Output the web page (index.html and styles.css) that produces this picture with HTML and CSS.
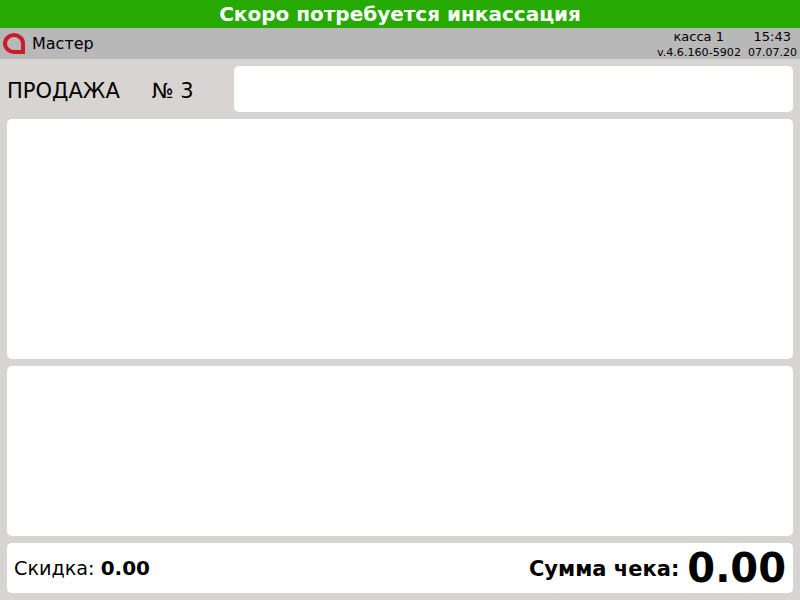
FILE: index.html
```html
<!DOCTYPE html>
<html lang="ru">
<head>
<meta charset="utf-8">
<title>Продажа</title>
<link rel="stylesheet" href="styles.css">
</head>
<body>
<div class="alert">Скоро потребуется инкассация</div>
<header class="status">
  <svg class="logo" width="22" height="22" viewBox="0 0 22 22"><path class="logo-ring" d="M20 19H11A9 8.5 0 1 1 20 10.5Z"/></svg>
  <span class="user">Мастер</span>
  <div class="info">
    <div class="info-top"><span>касса 1</span><span>15:43</span></div>
    <div class="info-bottom"><span class="version">v.4.6.160-5902</span><span>07.07.20</span></div>
  </div>
</header>
<main class="content">
  <div class="sale-row">
    <div class="sale-title"><span>ПРОДАЖА</span><span>№ 3</span></div>
    <div class="panel sale-input"></div>
  </div>
  <div class="panel list-main"></div>
  <div class="panel list-second"></div>
  <div class="panel totals">
    <div class="discount">Скидка: <b class="discount-value">0.00</b></div>
    <div class="sum"><b class="sum-label">Сумма чека:</b><b class="sum-value">0.00</b></div>
  </div>
</main>
</body>
</html>
```
FILE: styles.css
```css
* { box-sizing: border-box; }
html, body { margin: 0; height: 100%; }
body {
  width: 800px;
  height: 600px;
  overflow: hidden;
  background: #d7d4d1;
  color: #000;
  font-family: "DejaVu Sans", sans-serif;
  display: flex;
  flex-direction: column;
}
.alert {
  height: 28px;
  background: #26a900;
  color: #fff;
  font-size: 20px;
  font-weight: bold;
  line-height: 29px;
  text-align: center;
}
.status {
  height: 31px;
  background: #b8b8b8;
  display: flex;
  align-items: center;
  padding: 0 3px;
}
.logo { flex: none; margin-right: 7px; }
.logo-ring { fill: none; stroke: #c81e2c; stroke-width: 4; }
.user { font-size: 16px; }
.info { margin-left: auto; display: flex; flex-direction: column; align-items: flex-end; }
.info-top { font-size: 13px; line-height: 18px; display: flex; gap: 29.6px; padding-right: 6px; }
.info-bottom { font-size: 11px; line-height: 13px; display: flex; gap: 7px; }
.version { font-size: 11.13px; }
.content {
  flex: 1;
  display: flex;
  flex-direction: column;
  gap: 7px;
  padding: 7px 7px 7px;
}
.panel { background: #fff; border-radius: 5px; }
.sale-row { height: 46px; display: flex; }
.sale-title {
  width: 227px;
  font-size: 21px;
  padding-top: 3px;
  display: flex;
  align-items: center;
  gap: 32px;
}
.sale-input { flex: 1; }
.list-main { height: 240px; }
.list-second { height: 170px; }
.totals {
  height: 50px;
  display: flex;
  align-items: center;
  justify-content: space-between;
  padding: 0 7px;
}
.discount { font-size: 19.2px; }
.discount-value { font-size: 20px; }
.sum { display: flex; align-items: center; gap: 8px; }
.sum-label { font-size: 21px; padding-top: 2px; }
.sum-value { font-size: 40px; line-height: 50px; }
```
